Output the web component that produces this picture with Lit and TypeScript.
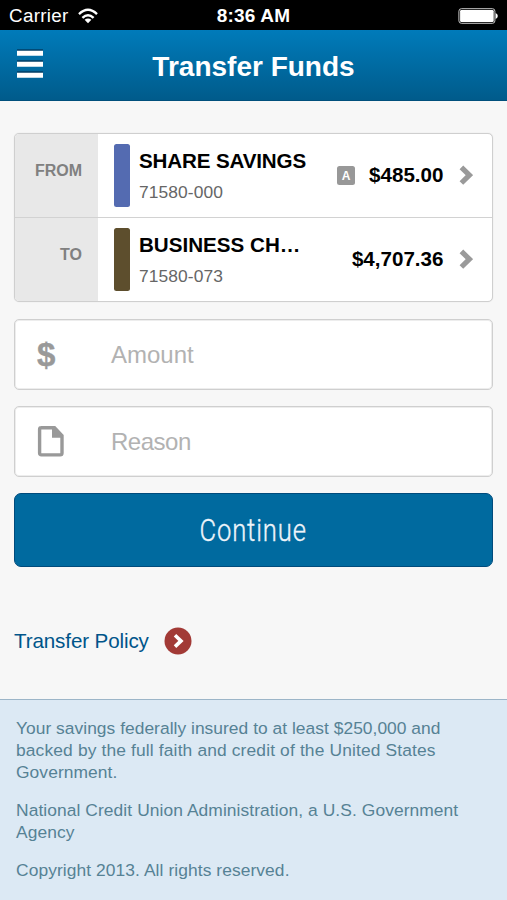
import { LitElement, html, css, svg } from "lit";
import { customElement, property } from "lit/decorators.js";

const chevron = svg`<path d="M2.4 2.4 L10.4 10.2 L2.4 18" fill="none" stroke="#9a9a9a" stroke-width="5.2"/>`;

@customElement("account-row")
class AccountRow extends LitElement {
  @property() label = "";
  @property() name = "";
  @property() number = "";
  @property() amount = "";
  @property() color = "";
  @property({ type: Boolean }) flagged = false;

  static styles = css`
    :host { display: flex; height: 83px; }
    .label { box-sizing: border-box; width: 83px; flex: none; background: #e8e8e8; color: #808080; font-weight: bold; font-size: 16px; line-height: 20px; padding: 27px 16px 0 0; text-align: right; }
    .body { flex: 1; min-width: 0; display: flex; align-items: flex-start; padding: 10px 19.5px 0 16px; }
    .swatch { width: 16px; height: 63px; border-radius: 2.5px; flex: none; }
    .info { margin-left: 9px; width: 170px; flex: none; }
    .name { font-size: 20.6px; line-height: 24px; font-weight: bold; color: #000; padding-top: 5px; white-space: nowrap; }
    .name.wide { letter-spacing: -0.15px; }
    .number { font-size: 17.4px; line-height: 22px; color: #666; margin-top: 8px; letter-spacing: 0.1px; }
    .right { margin-left: auto; display: flex; align-items: center; height: 62px; }
    .flag { width: 18px; height: 19px; border-radius: 2.5px; background: #989898; color: #fff; font-size: 12px; font-weight: bold; line-height: 20px; text-align: center; margin-right: 14px; }
    .amount { font-size: 20.6px; line-height: 24px; font-weight: bold; color: #000; }
    svg { margin-left: 15px; display: block; }
  `;

  render() {
    return html`
      <div class="label">${this.label}</div>
      <div class="body">
        <div class="swatch" style="background:${this.color}"></div>
        <div class="info">
          <div class="name ${this.flagged ? "wide" : ""}">${this.name}</div>
          <div class="number">${this.number}</div>
        </div>
        <div class="right">
          ${this.flagged ? html`<div class="flag">A</div>` : ""}
          <div class="amount">${this.amount}</div>
          <svg width="14" height="21" viewBox="0 0 14 21">${chevron}</svg>
        </div>
      </div>`;
  }
}

@customElement("app-root")
class AppRoot extends LitElement {
  static styles = css`
    :host { display: flex; flex-direction: column; height: 900px; overflow: hidden; background: #f7f7f7; font-family: "Liberation Sans", Arial, sans-serif; }
    .status { height: 30px; flex: none; background: #000; color: #fff; display: grid; grid-template-columns: 1fr auto 1fr; align-items: center; padding: 2px 9px 0 9px; box-sizing: border-box; font-size: 18.8px; line-height: 28px; }
    .carrier { display: flex; align-items: center; gap: 9px; letter-spacing: 0.33px; }
    .time { font-weight: bold; font-size: 19px; letter-spacing: 0.2px; }
    .battery { justify-self: end; display: block; }
    .header { height: 71px; flex: none; box-sizing: border-box; border-bottom: 1px solid #004f7c; background: linear-gradient(#007bba, #005b8b); display: grid; grid-template-columns: 1fr auto 1fr; align-items: center; padding: 0 16px; }
    .menu { display: block; margin-bottom: 3px; }
    .title { margin: 0; color: #fff; font-size: 28px; line-height: 32px; font-weight: bold; padding-top: 3px; }
    .main { flex: 1; padding: 32px 14px 0; }
    .box { box-sizing: border-box; background: #fff; border: 1px solid #cfcfcf; border-radius: 5px; overflow: hidden; }
    .accounts { height: 169px; box-shadow: 0 0 1px #d8d8d8; }
    .divider { height: 1px; background: #d2d2d2; }
    .field { height: 71px; margin-top: 16px; display: flex; align-items: center; font-size: 24px; color: #b2b2b2; box-shadow: inset 0 0 0 1px #ededed; }
    .accounts + .field { margin-top: 17px; }
    .tight { letter-spacing: -0.5px; }
    .icon { width: 96px; flex: none; padding-left: 22px; box-sizing: border-box; color: #999; }
    .dollar { font-weight: bold; font-size: 33px; line-height: 32px; -webkit-text-stroke: 0.4px #999; padding-top: 1px; }
    .icon svg { display: block; }
    .button { height: 74px; width: 100%; margin-top: 16px; box-sizing: border-box; border: 1px solid #004b7c; border-radius: 7px; background: #006a9f; color: #edf4fa; font-family: Roboto, sans-serif; font-weight: 300; font-size: 32px; padding: 0 0 1px; display: flex; justify-content: center; align-items: center; }
    .button span { display: block; transform: scaleX(0.8); letter-spacing: 1.1px; -webkit-text-stroke: 0.35px #edf4fa; }
    .policy { display: flex; align-items: center; margin-top: 60px; color: #00558a; font-size: 20.6px; letter-spacing: -0.12px; gap: 15px; }
    .policy svg { display: block; }
    .footer { height: 201px; flex: none; box-sizing: border-box; border-top: 1px solid #9cb5c8; background: #dce9f4; color: #568295; font-size: 17.4px; line-height: 22px; padding: 17px 16px 0; letter-spacing: 0.08px; }
    .footer p { margin: 0 0 16px; }
    .line { display: block; white-space: nowrap; }
    .line.snug { letter-spacing: 0.03px; }
    .line.loose { letter-spacing: 0.14px; }
  `;

  render() {
    return html`
      <div class="status">
        <div class="carrier">
          <span>Carrier</span>
          <svg width="20" height="16" viewBox="0 0 20 16" fill="none" stroke="#fff" stroke-width="2.4">
            <path d="M1 6.1 Q10 -2.4 19 6.1"/>
            <path d="M4.4 9.9 Q10 4.4 15.6 9.9"/>
            <path d="M10 15.2 L6.6 11.8 Q10 9.2 13.4 11.8 Z" fill="#fff" stroke="none"/>
          </svg>
        </div>
        <div class="time">8:36 AM</div>
        <svg class="battery" width="40" height="16" viewBox="0 0 40 16">
          <rect x="0.9" y="0.7" width="36" height="14.6" rx="2.5" fill="none" stroke="#c9c9c9" stroke-width="1"/>
          <rect x="2.1" y="1.9" width="33.6" height="12.2" rx="1.3" fill="#fff"/>
          <path d="M37.6 5 Q39.8 6.2 39.8 8 Q39.8 9.8 37.6 11 Z" fill="#fff"/>
        </svg>
      </div>
      <div class="header">
        <svg class="menu" width="28" height="32" viewBox="0 0 28 32">
          <path d="M1 2.3h26M1 13.3h26M1 24.3h26" stroke="#003e66" stroke-width="2"/>
          <path d="M1 5.3h26M1 16.3h26M1 27.3h26" stroke="#fff" stroke-width="5"/>
        </svg>
        <h1 class="title">Transfer Funds</h1>
      </div>
      <div class="main">
        <div class="box accounts">
          <account-row label="FROM" name="SHARE SAVINGS" number="71580-000" amount="$485.00" color="#546bb1" flagged></account-row>
          <div class="divider"></div>
          <account-row label="TO" name="BUSINESS CH…" number="71580-073" amount="$4,707.36" color="#5d4e2d"></account-row>
        </div>
        <div class="box field">
          <div class="icon dollar">$</div><div>Amount</div>
        </div>
        <div class="box field">
          <div class="icon">
            <svg width="28" height="31" viewBox="0 0 28 31">
              <path d="M3.8 1.8 H17.5 L25 9.6 V27 Q25 28.9 23.2 28.9 H4.4 Q2.6 28.9 2.6 27 V3.5 Q2.6 1.8 4.2 1.8 Z" fill="#fff" stroke="#999" stroke-width="3.4"/>
              <path d="M15 1 V11.8 H25.5 V9.5 L17.5 1.5 Z" fill="#999"/>
            </svg>
          </div>
          <div class="tight">Reason</div>
        </div>
        <button class="button"><span>Continue</span></button>
        <div class="policy">
          <span>Transfer Policy</span>
          <svg width="28" height="28" viewBox="0 0 28 28">
            <circle cx="14" cy="14" r="13.5" fill="#a23a36"/>
            <path d="M11 8.2 L17 13.9 L11 19.6" fill="none" stroke="#fff" stroke-width="3.6"/>
          </svg>
        </div>
      </div>
      <div class="footer">
        <p>
          <span class="line snug">Your savings federally insured to at least $250,000 and</span>
          <span class="line loose">backed by the full faith and credit of the United States</span>
          <span class="line">Government.</span>
        </p>
        <p>
          <span class="line">National Credit Union Administration, a U.S. Government</span>
          <span class="line">Agency</span>
        </p>
        <p>Copyright 2013. All rights reserved.</p>
      </div>`;
  }
}
